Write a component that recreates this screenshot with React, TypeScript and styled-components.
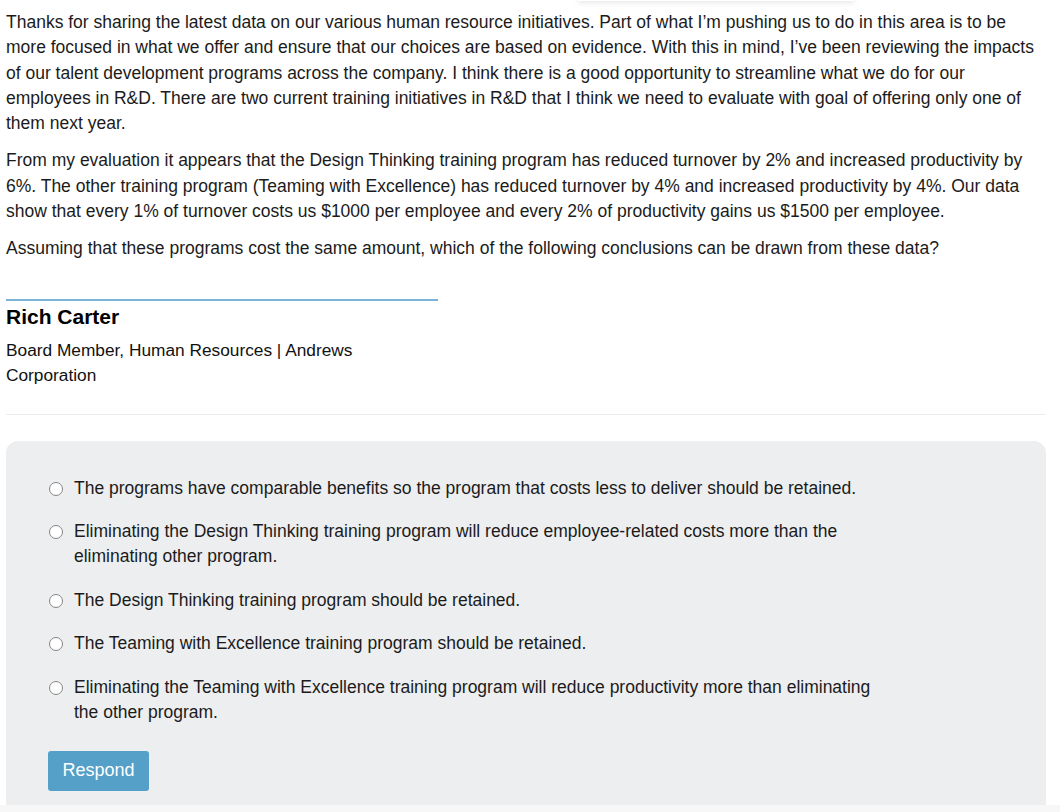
import React from "react";
import styled, { createGlobalStyle } from "styled-components";

const Global = createGlobalStyle`
  html, body { margin: 0; padding: 0; background: #ffffff; }
  body { font-family: "Liberation Sans", Arial, sans-serif; color: #1b1b1b; }
  * { box-sizing: border-box; }
`;

const Page = styled.div`
  position: relative;
  width: 1060px;
  height: 812px;
  overflow: hidden;
`;

const FloatingShadow = styled.div`
  position: absolute;
  left: 578px;
  top: -30px;
  width: 276px;
  height: 31px;
  background: #ffffff;
  box-shadow: 0 2px 5px rgba(0, 0, 0, 0.09);
`;

const Content = styled.div`
  width: 1046px;
  padding: 10px 0 0 6px;
`;

const Para = styled.p`
  margin: 0 0 12px 0;
  font-size: 17.5px;
  line-height: 25.3px;
`;

const Signature = styled.div`
  width: 432px;
  margin-top: 37px;
  border-top: 2px solid #7eb3d8;
  padding-top: 4px;
`;

const Name = styled.div`
  font-size: 21px;
  font-weight: bold;
  line-height: 24px;
  color: #000;
`;

const Title = styled.div`
  margin-top: 9px;
  font-size: 17.3px;
  line-height: 25px;
  color: #111;
`;

const Divider = styled.hr`
  margin: 26px 0 0 0;
  border: 0;
  border-top: 1px solid #ececec;
  height: 0;
`;

const Panel = styled.div`
  margin-top: 26px;
  background: #edeef0;
  border-radius: 12px 12px 0 0;
  height: 364px;
  padding: 35px 0 0 43px;
`;

const Options = styled.div`
  display: flex;
  flex-direction: column;
  gap: 18.5px;
`;

const Option = styled.label`
  display: flex;
  align-items: flex-start;
  gap: 11px;
  cursor: pointer;
`;

const Radio = styled.input`
  appearance: none;
  -webkit-appearance: none;
  width: 14px;
  height: 14px;
  margin: 6px 0 0 0;
  flex: none;
  border: 1px solid #858585;
  border-radius: 50%;
  background: #ffffff;
`;

const OptionText = styled.span`
  width: 810px;
  font-size: 17.5px;
  line-height: 25px;
  color: #1b1b1b;
`;

const Button = styled.button`
  margin: 26px 0 0 -1px;
  width: 101px;
  height: 40px;
  border: 0;
  border-radius: 3px;
  background: #55a0c8;
  color: #ffffff;
  font-family: "Liberation Sans", Arial, sans-serif;
  font-size: 18px;
  cursor: pointer;
`;

const Footer = styled.div`
  height: 10px;
  background: #f7f7f7;
  width: 1060px;
`;

const options = [
  "The programs have comparable benefits so the program that costs less to deliver should be retained.",
  "Eliminating the Design Thinking training program will reduce employee-related costs more than the eliminating other program.",
  "The Design Thinking training program should be retained.",
  "The Teaming with Excellence training program should be retained.",
  "Eliminating the Teaming with Excellence training program will reduce productivity more than eliminating the other program.",
];

export default function App() {
  return (
    <Page>
      <Global />
      <FloatingShadow />
      <Content>
        <Para>
          Thanks for sharing the latest data on our various human resource initiatives. Part of what I’m pushing us to do in this area is to be more focused in what we offer and ensure that our choices are based on evidence. With this in mind, I’ve been reviewing the impacts of our talent development programs across the company. I think there is a good opportunity to streamline what we do for our employees in R&amp;D. There are two current training initiatives in R&amp;D that I think we need to evaluate with goal of offering only one of them next year.
        </Para>
        <Para>
          From my evaluation it appears that the Design Thinking training program has reduced turnover by 2% and increased productivity by 6%. The other training program (Teaming with Excellence) has reduced turnover by 4% and increased productivity by 4%. Our data show that every 1% of turnover costs us $1000 per employee and every 2% of productivity gains us $1500 per employee.
        </Para>
        <Para>
          Assuming that these programs cost the same amount, which of the following conclusions can be drawn from these data?
        </Para>
        <Signature>
          <Name>Rich Carter</Name>
          <Title>Board Member, Human Resources | Andrews Corporation</Title>
        </Signature>
        <Divider />
        <Panel>
          <Options>
            {options.map((o, i) => (
              <Option key={i}>
                <Radio type="radio" name="answer" />
                <OptionText>{o}</OptionText>
              </Option>
            ))}
          </Options>
          <Button type="button">Respond</Button>
        </Panel>
      </Content>
      <Footer />
    </Page>
  );
}
